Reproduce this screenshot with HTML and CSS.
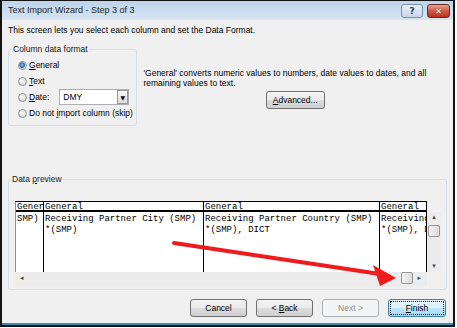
FILE: index.html
```html
<!DOCTYPE html>
<html lang="en">
<head>
    <meta charset="UTF-8">
    <title>Text Import Wizard - Step 3 of 3</title>
    <link rel="stylesheet" href="styles.css">
</head>
<body>
    <div class="window">
        <div class="titlebar">
            <span class="title">Text Import Wizard - Step 3 of 3</span>
            <span class="tb-btn help">?</span>
            <span class="tb-btn close">&#10005;</span>
        </div>

        <div class="client">
            <p class="intro">This screen lets you select each column and set the Data Format.</p>

            <div class="format-row">
                <fieldset class="group format-group">
                    <legend>Column data format</legend>
                    <div class="options">
                        <label class="opt"><span class="radio on"></span><span><u>G</u>eneral</span></label>
                        <label class="opt"><span class="radio"></span><span><u>T</u>ext</span></label>
                        <label class="opt"><span class="radio"></span><span><u>D</u>ate:</span>
                            <span class="select">DMY<span class="select-btn">&#9660;</span></span>
                        </label>
                        <label class="opt"><span class="radio"></span><span>Do not <u>i</u>mport column (skip)</span></label>
                    </div>
                </fieldset>
                <div class="info">
                    <p>'General' converts numeric values to numbers, date values to dates, and all remaining values to text.</p>
                    <button class="btn adv"><u>A</u>dvanced...</button>
                </div>
            </div>

            <fieldset class="group preview-group">
                <legend>Data <u>p</u>review</legend>
                <div class="preview">
                    <div class="sheet">
                        <div class="col c1">
                            <div class="head">General</div>
                            <div class="cells">SMP)</div>
                        </div>
                        <div class="col c2">
                            <div class="head">General</div>
                            <div class="cells">Receiving Partner City (SMP)
*(SMP)</div>
                        </div>
                        <div class="col c3">
                            <div class="head">General</div>
                            <div class="cells">Receiving Partner Country (SMP)
*(SMP), DICT</div>
                        </div>
                        <div class="col c4">
                            <div class="head">General</div>
                            <div class="cells">Receiving Partner Region (SMP)
*(SMP), DICT</div>
                        </div>
                    </div>
                    <div class="vscroll">
                        <span class="arr">&#9652;</span>
                        <span class="thumb"></span>
                        <span class="arr down">&#9662;</span>
                    </div>
                    <div class="hscroll">
                        <span class="arr">&#9666;</span>
                        <span class="thumb"></span>
                        <span class="arr">&#9656;</span>
                    </div>
                </div>
            </fieldset>

            <div class="buttons">
                <button class="btn">Cancel</button>
                <button class="btn">&lt; <u>B</u>ack</button>
                <button class="btn next" disabled>Next &gt;</button>
                <button class="btn finish"><span><u>F</u>inish</span></button>
            </div>
        </div>
    </div>

    <!-- red callout arrow drawn over the screenshot -->
    <svg class="callout" width="457" height="328" viewBox="0 0 457 328">
        <line x1="174" y1="243" x2="380" y2="274" stroke="#ee1c1c" stroke-width="4" stroke-linecap="round"/>
        <polygon points="396,278 373,265 380,286" fill="#ee1c1c"/>
    </svg>
</body>
</html>
```

FILE: styles.css
```css
* {
    box-sizing: border-box;
}
body {
    margin: 0;
    position: relative;
    background: #fff;
    font-family: "Liberation Sans", Arial, sans-serif;
    font-size: 8.5px;
    color: #000;
}
.window {
    width: 455px;
    height: 327px;
    border: 2px solid #141414;
    border-top-width: 1px;
    display: flex;
    flex-direction: column;
}
.titlebar {
    height: 19px;
    display: flex;
    align-items: flex-start;
    padding: 0 3px 0 6px;
    background: linear-gradient(#bdd4eb, #d7e5f4);
}
.title {
    flex: 1;
    font-size: 9px;
    line-height: 19px;
    color: #1e1e1e;
}
.tb-btn {
    margin-top: 3px;
    height: 14px;
    border-radius: 3px;
    display: flex;
    align-items: center;
    justify-content: center;
    font-family: "DejaVu Sans", sans-serif;
}
.help {
    width: 22px;
    margin-right: 4px;
    border: 1px solid #7790ad;
    background: linear-gradient(#e9f0f8, #c6d6e8);
    color: #2b3d55;
    font-size: 9px;
    font-weight: bold;
}
.close {
    width: 23px;
    border: 1px solid #6b2a22;
    background: linear-gradient(#e8a295, #cf5a47 50%, #b8321c);
    color: #fff;
    font-size: 8px;
    font-weight: bold;
    text-shadow: 0 0 1px #5a1b12;
}
.client {
    flex: 1;
    display: flex;
    flex-direction: column;
    padding: 5px 6px 0 6px;
    background: #f0f0f0;
    border-bottom: 2px solid #3a8db0;
}
.intro {
    margin: 0;
    line-height: 10px;
}
.format-row {
    display: flex;
    align-items: flex-start;
    margin-top: 9px;
}
.group {
    margin: 0;
    border: 1px solid #d5dfe5;
    border-radius: 3px;
}
.group legend {
    padding: 0 1px;
    line-height: 10px;
    color: #1a1a1a;
}
.format-group {
    width: 130px;
    height: 82px;
    padding: 3px 0 0 3px;
}
.options {
    padding-left: 6px;
}
.opt {
    display: flex;
    align-items: center;
    height: 16px;
}
.radio {
    width: 9px;
    height: 9px;
    margin-right: 2px;
    border: 1px solid #8e8f8f;
    border-radius: 50%;
    background: radial-gradient(circle at 40% 40%, #fbfbfb, #d4d4d4);
}
.radio.on {
    background: radial-gradient(circle at 45% 45%, #8fc0ee 0, #2b66b5 2.5px, #e9eef4 3.2px);
}
.select {
    width: 70px;
    height: 16px;
    margin-left: 10px;
    display: flex;
    align-items: center;
    padding-left: 3px;
    border: 1px solid #abadb3;
    background: #fff;
}
.select-btn {
    margin-left: auto;
    width: 11px;
    height: 14px;
    display: flex;
    align-items: center;
    justify-content: center;
    border: 1px solid #9a9a9a;
    background: linear-gradient(#f6f6f6, #dedede);
    font-size: 6px;
    font-family: "DejaVu Sans", sans-serif;
}
.info {
    width: 305px;
    margin-left: 6px;
    padding-top: 24px;
    display: flex;
    flex-direction: column;
    align-items: center;
}
.info p {
    margin: 0;
    align-self: stretch;
    line-height: 10px;
}
.btn {
    height: 18px;
    padding: 0;
    border: 1px solid #707070;
    border-radius: 3px;
    background: linear-gradient(#f2f2f2, #ebebeb 50%, #dddddd 50%, #cfcfcf);
    font-family: inherit;
    font-size: 8.5px;
    color: #000;
}
.adv {
    width: 59px;
    margin-top: 3px;
}
.preview-group {
    width: 439px;
    height: 116px;
    margin-top: 48px;
    padding: 17px 0 0 6px;
}
.preview-group legend {
    margin-left: -4px;
}
.preview {
    display: grid;
    grid-template-columns: 412px 14px;
    grid-template-rows: 11px 60px 15px;
}
.sheet {
    grid-row: 1 / 3;
    grid-column: 1;
    display: flex;
    overflow: hidden;
    background: #fff;
    border-top: 1px solid #000;
    border-left: 1px solid #8c8c8c;
    font-family: "Liberation Mono", "Courier New", monospace;
    font-size: 9px;
}
.col {
    flex: none;
    overflow: hidden;
    border-right: 1px solid #000;
}
.c1 { width: 28px; }
.c2 { width: 160px; }
.c3 { width: 176px; }
.c4 { width: 47px; }
.head {
    height: 10px;
    line-height: 11px;
    padding-left: 1px;
    white-space: nowrap;
    border-bottom: 2px solid #000;
}
.cells {
    padding: 2px 0 0 1px;
    line-height: 11px;
    white-space: pre;
}
.vscroll {
    grid-row: 2;
    grid-column: 2;
    display: flex;
    flex-direction: column;
    align-items: center;
    background: #ececec;
}
.hscroll {
    grid-row: 3;
    grid-column: 1;
    display: flex;
    align-items: flex-start;
    padding-left: 5px;
    background: #ececec;
}
.arr {
    font-family: "DejaVu Sans", sans-serif;
    font-size: 7px;
    line-height: 12px;
    color: #4a4a4a;
}
.vscroll .arr {
    line-height: 11px;
}
.vscroll .down {
    margin-top: auto;
}
.thumb {
    width: 12px;
    height: 12px;
    border: 1px solid #979797;
    border-radius: 2px;
    background: linear-gradient(90deg, #f4f4f4, #d9d9d9);
}
.vscroll .thumb {
    margin-top: 2px;
}
.hscroll .thumb {
    margin-left: auto;
    margin-right: 4px;
}
.hscroll .arr:last-child {
    margin-right: 6px;
}
.buttons {
    display: flex;
    justify-content: flex-end;
    gap: 9px;
    margin-top: 9px;
    padding-right: 1px;
}
.buttons .btn {
    width: 57px;
}
.buttons .next {
    color: #8d8d8d;
    border-color: #adb2b5;
    background: #f4f4f4;
}
.buttons .finish {
    width: 58px;
    border-color: #3c7fb1;
    background: linear-gradient(#eaf6fd, #d9f0fc 50%, #bee6fd 50%, #a7d9f5);
}
.finish span {
    display: block;
    margin: 1px;
    line-height: 12px;
    border: 1px dotted #222;
}
.callout {
    position: absolute;
    top: 0;
    left: 0;
    pointer-events: none;
}
```
